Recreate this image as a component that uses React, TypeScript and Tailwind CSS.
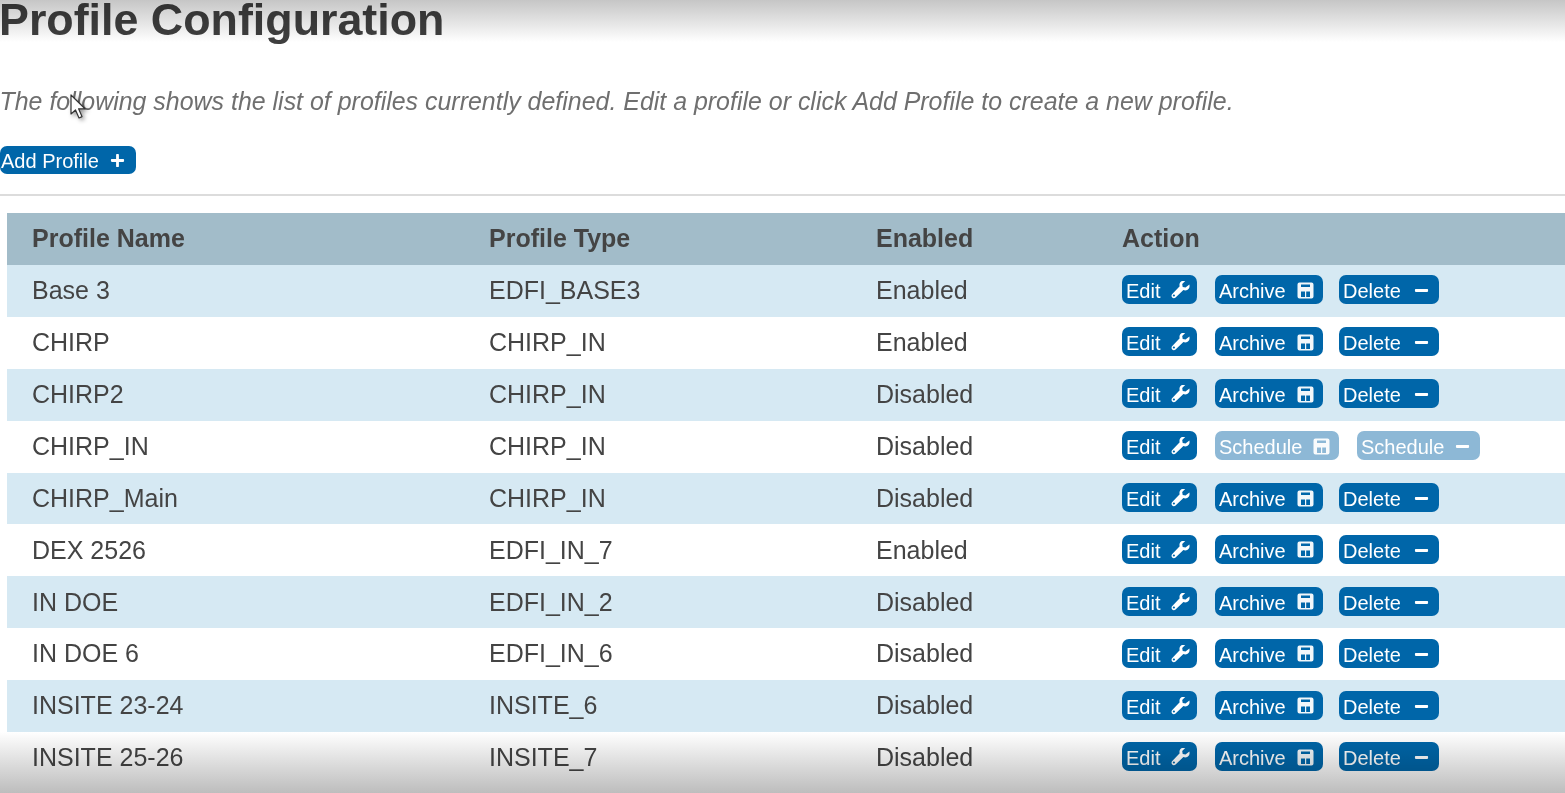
import React from 'react';
import { FaPlus, FaMinus } from 'react-icons/fa';

const FONT = 'font-["Liberation_Sans",Arial,sans-serif]';

const profiles = [
  { name: 'Base 3', type: 'EDFI_BASE3', enabled: 'Enabled' },
  { name: 'CHIRP', type: 'CHIRP_IN', enabled: 'Enabled' },
  { name: 'CHIRP2', type: 'CHIRP_IN', enabled: 'Disabled' },
  { name: 'CHIRP_IN', type: 'CHIRP_IN', enabled: 'Disabled', locked: true },
  { name: 'CHIRP_Main', type: 'CHIRP_IN', enabled: 'Disabled' },
  { name: 'DEX 2526', type: 'EDFI_IN_7', enabled: 'Enabled' },
  { name: 'IN DOE', type: 'EDFI_IN_2', enabled: 'Disabled' },
  { name: 'IN DOE 6', type: 'EDFI_IN_6', enabled: 'Disabled' },
  { name: 'INSITE 23-24', type: 'INSITE_6', enabled: 'Disabled' },
  { name: 'INSITE 25-26', type: 'INSITE_7', enabled: 'Disabled' },
];

const SaveIcon = () => (
  <svg viewBox="0 0 17 17" className="w-[17px] h-[17px] mt-[1px] opacity-95" fill="currentColor">
    <path
      fillRule="evenodd"
      d="M2.5 0.5h12a2 2 0 0 1 2 2v12a2 2 0 0 1-2 2h-12a2 2 0 0 1-2-2v-12a2 2 0 0 1 2-2zM4 2.5v2.6h9v-2.6zM4 9.5v5.5h4v-5.5zM9.2 9.5v5.5h3.8v-5.5z"
    />
  </svg>
);

const WrenchIcon = () => (
  <svg viewBox="0 0 20 18" className="w-[20px] h-[18px] mt-[1px] -mr-[2px]" fill="currentColor">
    <path
      fillRule="evenodd"
      d="M19.4 3.6c.5 2.2-.2 4.200-1.800 5.200-1.300.8-2.900.9-4.200.3L5.600 16.500c-1 .9-2.500.9-3.400 0-.9-1-.9-2.500.1-3.400L9.700 5.300c-.5-1.400-.3-2.900.6-4.100C11.400-.2 13.300-.6 15.200.1l-3 3 .5 2.800 2.800.6z M3.900 13.400a1.100 1.100 0 1 0 0 2.200 1.100 1.100 0 0 0 0-2.200z"
    />
  </svg>
);

const MinusIcon = () => <FaMinus className="w-[15px] h-[15px] mt-[2px] mr-[1px]" />;

const ActionButton: React.FC<{
  label: string;
  icon: React.ReactNode;
  width: string;
  muted?: boolean;
}> = ({ label, icon, width, muted }) => (
  <span
    className={`flex items-center justify-between h-[29px] pl-[4px] pr-[9px] rounded-[7px] text-[20px] text-white ${width} ${muted ? 'bg-[#8db8d6]' : 'bg-[#0066a9]'}`}
  >
    <span className="pt-[3px]">{label}</span>
    {icon}
  </span>
);

const App: React.FC = () => {
  return (
    <div className={`relative h-[793px] w-[1565px] overflow-hidden bg-white text-[#444] ${FONT}`}>
      <h1 className="h-[40px] text-[44.8px] leading-[38px] font-bold text-[#3f3f3f] whitespace-nowrap -ml-[1px]">
        Profile Configuration
      </h1>
      <p className="mt-[47px] -ml-[0.5px] text-[24.95px] leading-[28px] italic text-[#6f6f6f] whitespace-nowrap">
        The following shows the list of profiles currently defined. Edit a profile or click Add Profile to create a new profile.
      </p>
      <div className="mt-[31px] flex">
        <span className="flex items-center justify-between h-[28px] w-[136px] pl-[1px] pr-[11px] rounded-[7px] text-[20px] text-white bg-[#0066a9]">
          <span className="pt-[1px]">Add Profile</span>
          <FaPlus className="w-[15px] h-[15px]" />
        </span>
      </div>
      <div className="mt-[20px] h-[2px] bg-[#dcdcdc]" />
      <div className="mt-[17px] ml-[6.5px]">
        <div className="grid grid-cols-[457px_387px_246px_1fr] items-center h-[52px] pl-[25.5px] bg-[#a2bcc9] text-[25px] font-bold text-[#444]">
          <span>Profile Name</span>
          <span>Profile Type</span>
          <span>Enabled</span>
          <span>Action</span>
        </div>
        {profiles.map((p, i) => (
          <div
            key={p.name}
            className={`grid grid-cols-[457px_387px_246px_1fr] items-center h-[51.9px] pl-[25.5px] text-[25px] ${i % 2 === 0 ? 'bg-[#d6e9f3]' : 'bg-white'}`}
          >
            <span>{p.name}</span>
            <span>{p.type}</span>
            <span>{p.enabled}</span>
            <div className="flex items-center mb-[2px]">
              <ActionButton label="Edit" width="w-[75px]" icon={<WrenchIcon />} />
              {p.locked ? (
                <>
                  <span className="ml-[18px]">
                    <ActionButton label="Schedule" width="w-[124px]" muted icon={<SaveIcon />} />
                  </span>
                  <span className="ml-[18px]">
                    <ActionButton label="Schedule" width="w-[123px]" muted icon={<MinusIcon />} />
                  </span>
                </>
              ) : (
                <>
                  <span className="ml-[18px]">
                    <ActionButton label="Archive" width="w-[108px]" icon={<SaveIcon />} />
                  </span>
                  <span className="ml-[16px]">
                    <ActionButton label="Delete" width="w-[100px]" icon={<MinusIcon />} />
                  </span>
                </>
              )}
            </div>
          </div>
        ))}
      </div>

      {/* soft shadows at the top and bottom of the capture */}
      <div className="absolute inset-x-0 top-0 h-[42px] bg-gradient-to-b from-[#c6c6c6] to-white mix-blend-multiply pointer-events-none" />
      <div className="absolute inset-x-0 bottom-0 h-[61px] bg-gradient-to-t from-[#bdbdbd] to-white mix-blend-multiply pointer-events-none" />

      {/* mouse cursor */}
      <svg className="absolute left-[69px] top-[94px] w-[20px] h-[28px] drop-shadow-[2px_2px_2px_rgba(0,0,0,0.4)]" viewBox="0 0 20 28">
        <path d="M2 1v19l4.500-4 3.500 8 3-1.400-3.400-7.800H16z" fill="#fff" stroke="#333" strokeWidth="1.200" strokeLinejoin="round" />
      </svg>
    </div>
  );
};

export default App;
